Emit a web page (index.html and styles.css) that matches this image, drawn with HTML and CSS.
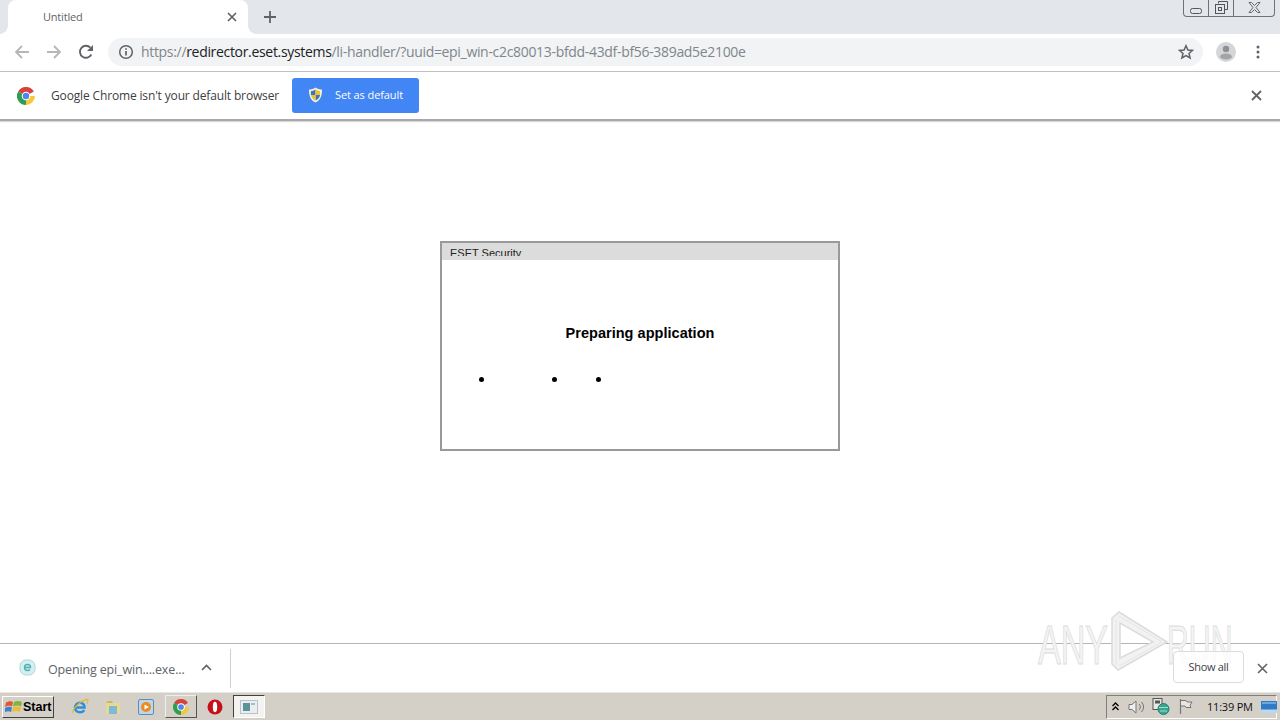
FILE: index.html
```html
<!DOCTYPE html>
<html lang="en">
<head>
<meta charset="utf-8">
<title>Untitled</title>
<link rel="stylesheet" href="styles.css">
</head>
<body>
<div class="tabstrip">
  <div class="tab">
    <span class="tab-title">Untitled</span>
    <svg class="tab-close" width="10" height="10" viewBox="0 0 10 10"><path d="M1 1l8 8M9 1l-8 8" stroke="#5f6368" stroke-width="1.7" fill="none"/></svg>
  </div>
  <svg class="new-tab" width="12" height="12" viewBox="0 0 12 12"><path d="M6 0v12M0 6h12" stroke="#5f6368" stroke-width="1.8" fill="none"/></svg>
  <div class="win-controls">
    <div class="win-btn"><svg width="12" height="6" viewBox="0 0 12 6"><rect x="0.5" y="0.5" width="11" height="5" rx="2" fill="none" stroke="#555"/></svg></div>
    <div class="win-btn"><svg width="13" height="13" viewBox="0 0 13 13"><path d="M3.5 2.5V.5h9v8h-3" fill="none" stroke="#555"/><rect x=".5" y="3.5" width="9" height="9" fill="none" stroke="#555"/><rect x="3.5" y="6.5" width="3" height="3" fill="none" stroke="#555"/></svg></div>
    <div class="win-btn win-btn-last"><svg width="13" height="11" viewBox="0 0 13 11"><path d="M1 .5h2.500l3 3 3-3H12L8 5.500l4 5H9.500l-3-3-3 3H1l4-5z" fill="none" stroke="#666"/></svg></div>
  </div>
</div>

<div class="toolbar">
  <svg class="nav-icon" width="16" height="16" viewBox="0 0 16 16"><path d="M15 8H2M8 2L2 8l6 6" fill="none" stroke="#b4b6b9" stroke-width="1.8"/></svg>
  <svg class="nav-icon" width="16" height="16" viewBox="0 0 16 16"><path d="M1 8h13M8 2l6 6-6 6" fill="none" stroke="#b4b6b9" stroke-width="1.8"/></svg>
  <svg class="nav-icon" width="16" height="16" viewBox="0 0 16 16"><path d="M13.300 10.500A6 6 0 1 1 12.400 3.700" fill="none" stroke="#5f6368" stroke-width="1.9"/><path d="M15 1v6H9z" fill="#5f6368"/></svg>
  <div class="omnibox">
    <svg class="info" width="16" height="16" viewBox="0 0 16 16"><circle cx="8" cy="8" r="6.300" fill="none" stroke="#5f6368" stroke-width="1.500"/><path d="M8 7v4.500M8 4.300v1.500" stroke="#5f6368" stroke-width="1.700"/></svg>
    <span class="url"><span class="url-dim">https://</span><span class="url-host">redirector.eset.systems</span><span class="url-dim">/li-handler/?uuid=epi_win-c2c80013-bfdd-43df-bf56-389ad5e2100e</span></span>
    <svg class="star" width="16" height="16" viewBox="0 0 16 16"><path d="M8 1.700l1.900 4.300 4.600.4-3.500 3 1.100 4.600L8 11.600 3.900 14l1.100-4.600-3.500-3 4.600-.4z" fill="none" stroke="#5f6368" stroke-width="1.500"/></svg>
  </div>
  <svg class="avatar" width="20" height="20" viewBox="0 0 20 20"><circle cx="10" cy="10" r="10" fill="#d5d6d8"/><circle cx="10" cy="7" r="3.200" fill="#8e9094"/><ellipse cx="10" cy="14.500" rx="6" ry="3" fill="#a2a4a7"/></svg>
  <svg class="menu" width="4" height="14" viewBox="0 0 4 14"><circle cx="2" cy="2" r="1.500" fill="#5f6368"/><circle cx="2" cy="7" r="1.500" fill="#5f6368"/><circle cx="2" cy="12" r="1.500" fill="#5f6368"/></svg>
</div>

<div class="infobar">
  <svg class="chrome-logo" width="18" height="18" viewBox="0 0 18 18">
    <path d="M9 9L1.200 4.500A9 9 0 0 1 16.800 4.500z" fill="#d8423a"/>
    <path d="M9 9H18A9 9 0 0 1 9 18z" fill="#f5c83c"/>
    <path d="M9 9L9 18A9 9 0 0 1 1.200 4.500z" fill="#2f9e50"/>
    <circle cx="9" cy="9" r="4.300" fill="#fff"/><circle cx="9" cy="9" r="3.200" fill="#4a88ea"/>
  </svg>
  <span class="info-text">Google Chrome isn't your default browser</span>
  <div class="default-btn">
    <svg width="15" height="16" viewBox="0 0 15 16"><path d="M7.500 .5C5.500 2 3 2.500 1 2.500c0 6 1 10.500 6.500 13C13 13 14 8.500 14 2.500c-2 0-4.500-.5-6.500-2z" fill="#f3f1d8"/><path d="M7.500 2.500V8H2.800C3 5 3 4.500 3 4c2 0 3.300-.6 4.500-1.500z" fill="#3f72c4"/><path d="M7.500 8h4.600c-.5 2.700-2 4.300-4.600 5.500z" fill="#3f72c4"/><path d="M7.500 2.500c1.200.9 2.500 1.500 4.500 1.500 0 1.500.1 2.800-.1 4H7.500zM7.500 8v5.500C5 12.300 3.500 10.700 2.900 8z" fill="#eec22e"/></svg>
    <span>Set as default</span>
  </div>
  <svg class="info-close" width="11" height="11" viewBox="0 0 11 11"><path d="M1 1l9 9M10 1l-9 9" stroke="#5f6368" stroke-width="1.800" fill="none"/></svg>
</div>

<main class="page">
  <div class="dialog">
    <div class="dialog-title"><span class="dialog-title-text">ESET Security</span></div>
    <div class="dialog-body">
      <div class="dialog-msg">Preparing application</div>
      <div class="dots"><i class="dot"></i><i class="dot dot-b"></i><i class="dot dot-c"></i></div>
    </div>
  </div>
</main>

<div class="downloads">
  <svg class="eset-icon" width="17" height="17" viewBox="0 0 17 17"><rect x="1" y="1" width="15" height="15" rx="6" fill="#d5eeee" stroke="#a8d8da"/><path d="M5.500 8.500h6c0-2-1.200-3-3-3s-3 1.300-3 3 1.200 3 3 3c1.200 0 2-.4 2.500-1" fill="none" stroke="#4fb0b5" stroke-width="1.400"/></svg>
  <span class="dl-name">Opening epi_win....exe...</span>
  <svg class="dl-caret" width="11" height="7" viewBox="0 0 11 7"><path d="M1 6l4.500-4.500L10 6" fill="none" stroke="#5f6368" stroke-width="1.600"/></svg>
  <div class="dl-sep"></div>
  <div class="dl-spacer"></div>
  <div class="show-all">Show all</div>
  <svg class="dl-close" width="11" height="11" viewBox="0 0 11 11"><path d="M1 1l9 9M10 1l-9 9" stroke="#5f6368" stroke-width="1.600" fill="none"/></svg>
</div>

<div class="taskbar">
  <div class="start">
    <svg width="17" height="16" viewBox="0 0 17 16"><path d="M1 3.500C4 2 6 2 8 3L7 7.500C5 6.500 3 6.500 0 8z" fill="#e2582a"/><path d="M9 3c2-1 4.500-1.500 8 0l-1 4.500c-3-1.500-5-1-8 0z" fill="#7db53d"/><path d="M0 9c3-1.500 5-1.500 7-.5L6 13c-2-1-4-1-7 .5z" fill="#3d7fd0"/><path d="M8 8.500c3-1 5-1.500 8 0L15 13c-3-1.500-5-1-8 0z" fill="#f0bb2e"/></svg>
    <span>Start</span>
  </div>
  <div class="quick">
    <svg width="18" height="18" viewBox="0 0 18 18"><path d="M4 9.500h9.500c0-3-2-4.800-4.500-4.800S4 6.800 4 9.500s2 4.800 5 4.800c2 0 3.400-.8 4.300-2.200" fill="none" stroke="#2f8fd8" stroke-width="2.600"/><path d="M2 15C1 11 9 3 15.500 1.500c2-.4 1.500 2 .5 4" fill="none" stroke="#e9b52c" stroke-width="1.200"/></svg>
    <svg width="18" height="18" viewBox="0 0 18 18"><path d="M2 5h14v11H2z" fill="#e9d98e"/><path d="M2 5l2-2h4l1 2z" fill="#cbb660"/><rect x="5" y="8" width="8" height="8" fill="#7fb9d8"/></svg>
    <svg width="18" height="18" viewBox="0 0 18 18"><rect x="1.500" y="1.500" width="15" height="15" rx="1.500" fill="#bcd6ec" stroke="#5c8db8"/><circle cx="9" cy="9" r="5" fill="#ee8a1e"/><path d="M7.500 6.500L12 9l-4.500 2.500z" fill="#fff"/></svg>
  </div>
  <div class="task-btn task-chrome">
    <svg width="16" height="16" viewBox="0 0 18 18"><path d="M9 9L1.200 4.500A9 9 0 0 1 16.800 4.500z" fill="#d8423a"/><path d="M9 9H18A9 9 0 0 1 9 18z" fill="#f5c83c"/><path d="M9 9L9 18A9 9 0 0 1 1.200 4.500z" fill="#2f9e50"/><circle cx="9" cy="9" r="4.300" fill="#fff"/><circle cx="9" cy="9" r="3.200" fill="#4a88ea"/></svg>
  </div>
  <svg class="opera" width="16" height="16" viewBox="0 0 16 16"><ellipse cx="8" cy="8" rx="7.500" ry="7.500" fill="#c8101a"/><ellipse cx="8" cy="8" rx="2.200" ry="5.200" fill="#fff"/></svg>
  <div class="task-btn task-active">
    <svg width="18" height="14" viewBox="0 0 18 14"><rect x=".5" y=".5" width="17" height="13" fill="#e8eef2" stroke="#b8c2c8"/><rect x="3" y="3" width="7" height="8" fill="#5f9296"/><rect x="11" y="3" width="4" height="2" fill="#a8bcc4"/></svg>
  </div>
  <div class="task-spacer"></div>
  <div class="tray">
    <svg width="7" height="9" viewBox="0 0 7 9"><path d="M.5 4l3-3 3 3M.5 8l3-3 3 3" fill="none" stroke="#000" stroke-width="1.300"/></svg>
    <svg class="tray-speaker" width="18" height="16" viewBox="0 0 18 16"><path d="M1 5.500h3L8 2v12L4 10.500H1z" fill="#eee" stroke="#777"/><path d="M11 5a4 4 0 0 1 0 6M13.500 3a7 7 0 0 1 0 10" fill="none" stroke="#777"/></svg>
    <svg class="tray-net" width="18" height="17" viewBox="0 0 18 17"><rect x="1" y="0.500" width="9" height="11" fill="#e8e8e0" stroke="#555"/><rect x="3" y="2.500" width="5" height="3" fill="#555"/><circle cx="11.500" cy="11" r="5.500" fill="#3aa58c" stroke="#1d7f80"/><path d="M7 9.500h9M8 13h7" stroke="#9fdccc"/></svg>
    <svg class="tray-flag" width="14" height="15" viewBox="0 0 14 15"><path d="M1.500 0v15" stroke="#777" stroke-width="1.200"/><path d="M2 1.500h5l1 1.500h5l-2 3.500 1 2H7L6 7H2" fill="#e8e6e0" stroke="#777"/></svg>
    <span class="clock">11:39 PM</span>
    <svg width="16" height="12" viewBox="0 0 16 12"><rect width="16" height="12" fill="#2f7bc8"/><rect y="8.500" width="16" height="3.500" fill="#bcd8ee"/><rect x="1" y="1" width="14" height="2" fill="#6aa8e0"/></svg>
  </div>
</div>

<div class="watermark" aria-hidden="true">
  <span class="wm-text">ANY</span>
  <svg class="wm-mark" width="62" height="64" viewBox="0 0 62 64"><path d="M3 12V55L9 61 58 33 10 3 3 9zM11 14V49L44 33z" fill="#f2f2f2" fill-rule="evenodd" stroke="#dcdcdc" stroke-width="1.500"/><path d="M7 10V56M10 7L53 33 10 57" fill="none" stroke="#e6e6e6"/></svg>
  <span class="wm-text wm-run">RUN</span>
</div>
</body>
</html>
```

FILE: styles.css
```css
* { box-sizing: border-box; }
html, body { margin: 0; height: 100%; }
body {
  width: 1280px;
  height: 720px;
  overflow: hidden;
  display: flex;
  flex-direction: column;
  position: relative;
  background: #fff;
  font-family: "Open Sans", "Liberation Sans", sans-serif;
  color: #3c4043;
}
svg { display: block; flex: none; }

.tabstrip {
  height: 34px;
  flex: none;
  background: #e3e6ea;
  display: flex;
  align-items: center;
  padding-left: 8px;
}
.tab {
  width: 240px;
  height: 34px;
  background: #fff;
  border-radius: 8px 8px 0 0;
  display: flex;
  align-items: center;
  padding: 0 11px 0 35px;
  position: relative;
}
.tab::before, .tab::after {
  content: "";
  position: absolute;
  bottom: 0;
  width: 8px;
  height: 8px;
}
.tab::before { left: -8px; background: radial-gradient(circle at 0 0, #e3e6ea 7.5px, #fff 8px); }
.tab::after { right: -8px; background: radial-gradient(circle at 100% 0, #e3e6ea 7.5px, #fff 8px); }
.tab-title { flex: 1; font-size: 11px; letter-spacing: -0.2px; color: #5f6368; padding-bottom: 1px; }
.new-tab { margin-left: 16px; }
.win-controls {
  margin-left: auto;
  margin-right: 5px;
  align-self: flex-start;
  display: flex;
  height: 17px;
  width: 92px;
  border: 1px solid #6f7275;
  border-top: none;
  border-radius: 0 0 4px 4px;
}
.win-btn {
  width: 25px;
  border-right: 1px solid #6f7275;
  display: flex;
  align-items: flex-end;
  justify-content: center;
  padding-bottom: 2px;
}
.win-btn-last { flex: 1; border-right: none; padding-bottom: 3px; }

.toolbar {
  height: 38px;
  flex: none;
  background: #fff;
  border-bottom: 1px solid #bfc0c2;
  display: flex;
  align-items: center;
  padding: 0 0 2px 14px;
  gap: 16px;
}
.omnibox {
  width: 1095px;
  height: 28px;
  margin-left: -2px;
  border-radius: 14px;
  background: #f1f3f4;
  display: flex;
  align-items: center;
  padding: 0 9px 0 10px;
}
.url { flex: 1; margin-left: 7px; font-size: 14px; letter-spacing: -0.32px; white-space: nowrap; }
.url-dim { color: #80868b; }
.url-host { color: #202124; }
.avatar { margin-left: -3px; }
.menu { margin-left: 4px; }

.infobar {
  height: 49px;
  flex: none;
  background: #fff;
  border-bottom: 2px solid #a8a8a8;
  box-shadow: 0 1px 1px #d8d8d8;
  display: flex;
  align-items: center;
  padding: 0 18px 0 17px;
  position: relative;
}
.info-text { margin-left: 16px; font-size: 12px; letter-spacing: -0.15px; color: #3c4043; white-space: nowrap; }
.default-btn {
  width: 127px;
  height: 35px;
  margin-left: 13px;
  background: #4285f4;
  border-radius: 3px;
  display: flex;
  align-items: center;
  padding: 0 0 2px 16px;
  gap: 12px;
  color: #fff;
  font-size: 11px;
  letter-spacing: -0.1px;
}
.info-close { margin-left: auto; }

.page {
  flex: 1;
  background: #fff;
  padding-top: 120px;
  display: flex;
  justify-content: center;
  align-items: flex-start;
}
.dialog {
  width: 400px;
  height: 210px;
  border: 2px solid #999;
  display: flex;
  flex-direction: column;
  font-family: "Liberation Sans", sans-serif;
  color: #000;
}
.dialog-title { height: 17px; flex: none; background: #dcdcdc; padding: 4px 0 0 8px; }
.dialog-title-text {
  display: block;
  height: 9px;
  overflow: hidden;
  font-size: 11px;
  line-height: 12px;
  color: #222;
}
.dialog-body { flex: 1; display: flex; flex-direction: column; }
.dialog-msg {
  margin-top: 64px;
  text-align: center;
  font-size: 14.500px;
  letter-spacing: 0.03px;
  font-weight: 700;
  line-height: 18px;
}
.dots { display: flex; margin-top: 35px; padding-left: 37px; }
.dot { display: block; width: 5px; height: 5px; border-radius: 50%; background: #000; }
.dot-b { margin-left: 68px; }
.dot-c { margin-left: 39px; }

.downloads {
  height: 49px;
  flex: none;
  background: #fff;
  border-top: 1px solid #b5b5b5;
  display: flex;
  align-items: center;
  padding-left: 19px;
}
.eset-icon { margin-top: -2px; }
.dl-name { margin-left: 12px; padding-top: 3px; font-size: 12.500px; color: #5f6368; width: 153px; white-space: nowrap; letter-spacing: -0.15px; }
.dl-caret { margin-top: -1px; }
.dl-sep { width: 1px; height: 39px; margin-left: 18px; background: #d0d0d0; }
.dl-spacer { flex: 1; }
.show-all {
  width: 71px;
  height: 32px;
  padding-bottom: 2px;
  border: 1px solid #dadce0;
  border-radius: 4px;
  background: rgba(255,255,255,.8);
  font-size: 11px;
  letter-spacing: -0.3px;
  color: #3c4043;
  display: flex;
  align-items: center;
  justify-content: center;
  margin-top: -2px;
  position: relative;
  z-index: 1;
}
.dl-close { margin: 0 12px 0 13px; }

.taskbar {
  height: 28px;
  flex: none;
  background: #d4d0c8;
  border-top: 1px solid #e8e6e0;
  display: flex;
  align-items: center;
  padding-left: 2px;
  color: #000;
}
.start {
  width: 52px;
  height: 22px;
  display: flex;
  align-items: center;
  gap: 1px;
  padding-left: 2px;
  background: #d4d0c8;
  border: 1px solid;
  border-color: #fff #404040 #404040 #fff;
  font-family: "Liberation Sans", sans-serif;
  font-weight: 700;
  font-size: 12.500px;
}
.quick { display: flex; margin-left: 17px; gap: 15px; }
.task-btn {
  width: 32px;
  height: 23px;
  display: flex;
  align-items: center;
  justify-content: center;
  border: 1px solid;
  border-color: #fff #404040 #404040 #fff;
}
.task-chrome { margin-left: 10px; border-color: #f0eee8 #555 #555 #f0eee8; }
.opera { margin-left: 10px; }
.task-active { margin-left: 10px; background: #f4f3f0; border-color: #404040 #fff #fff #404040; }
.task-spacer { flex: 1; }
.tray {
  width: 171px;
  height: 24px;
  margin-right: 3px;
  border: 1px solid;
  border-color: #808080 #fff #fff #808080;
  display: flex;
  align-items: center;
  padding-left: 5px;
  gap: 8px;
}
.tray-speaker { margin-left: 1px; }
.tray-net { margin-left: -2px; }
.tray-flag { margin-left: 1px; }
.clock {
  margin-left: 6px;
  font-family: "Open Sans", sans-serif;
  font-size: 11px;
  letter-spacing: -0.2px;
  white-space: nowrap;
  color: #111;
}

.watermark {
  position: absolute;
  left: 1038px;
  top: 609px;
  width: 198px;
  height: 64px;
  display: flex;
  align-items: center;
  pointer-events: none;
}
.wm-mark { margin-left: 3px; }
.wm-text {
  font-family: "Liberation Sans", sans-serif;
  font-size: 55px;
  line-height: 50px;
  color: #f4f4f4;
  -webkit-text-stroke: 1px #dcdcdc;
  display: block;
  width: 68px;
  margin-top: 7px;
  white-space: nowrap;
  transform: scaleX(.62);
  transform-origin: 0 50%;
}
.wm-run { margin-left: -4px; transform: scaleX(.55); }
```
